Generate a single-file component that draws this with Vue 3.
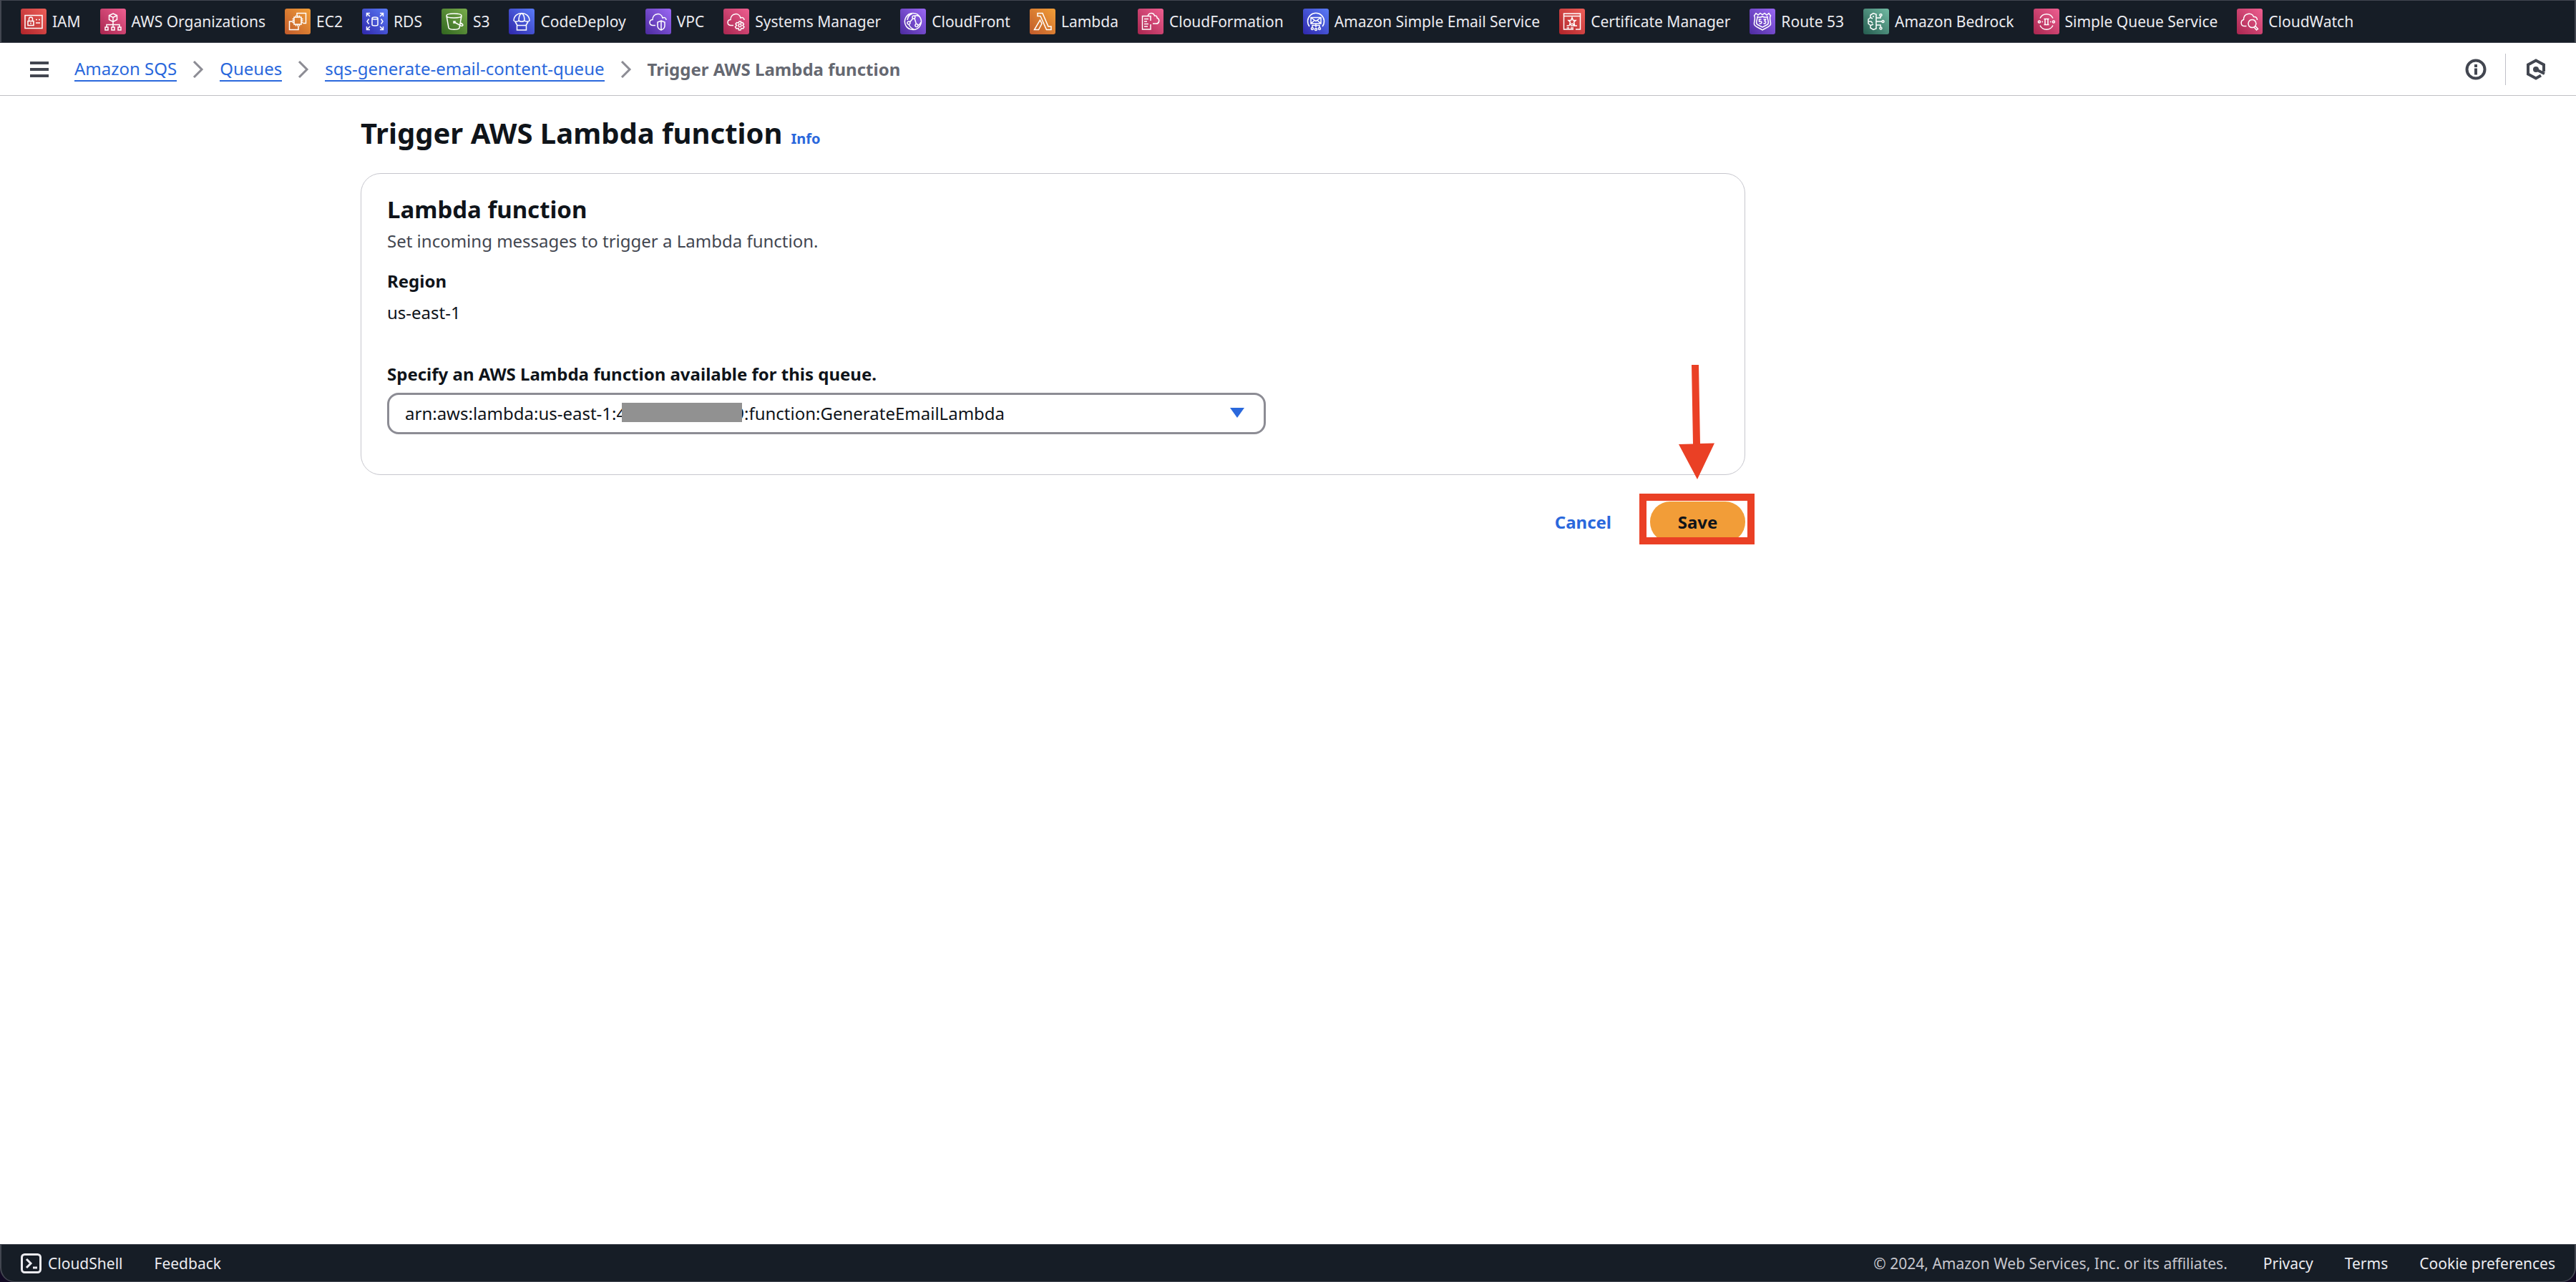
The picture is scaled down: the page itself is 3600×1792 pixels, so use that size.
<script setup>
import { ref } from 'vue'

const services = [
  {
    name: 'IAM', tone: 'red',
    d: 'M6 9.500H30V27.500H6Z M10 17.500H18V23.500H10Z M11.500 17.500V14.500A2.500 2.500 0 0 1 16.500 14.500V17.500 M14 19.500V21.500 M21 15.500H23 M25 15.500H27 M21 20H27'
  },
  {
    name: 'AWS Organizations', tone: 'pink',
    d: 'M18 7L23.500 9.500V15.500L18 18.500L12.500 15.500V9.500Z M12.500 9.500L18 12.500L23.500 9.500 M18 12.500V26 M9 26V22.500H27V26 M7 26H11V30H7Z M16 26H20V30H16Z M25 26H29V30H25Z'
  },
  {
    name: 'EC2', tone: 'orange',
    d: 'M13 12H23V22H13Z M15.500 9.500V12 M18 9.500V12 M20.500 9.500V12 M15.500 22V24.500 M18 22V24.500 M20.500 22V24.500 M10.500 14.500H13 M10.500 17H13 M10.500 19.500H13 M23 14.500H25.500 M23 17H25.500 M23 19.500H25.500 M17 10V6.500H29.500V20.500H25.500 M11 18H6.500V29.500H19V24.500'
  },
  {
    name: 'RDS', tone: 'blue',
    d: 'M14 13.500C14 11.500 22 11.500 22 13.500V22.500C22 24.500 14 24.500 14 22.500Z M14 13.500C14 15.500 22 15.500 22 13.500 M6.500 11V6.500H11 M6.500 6.500L11 11 M25 6.500H29.500V11 M29.500 6.500L25 11 M6.500 25V29.500H11 M6.500 29.500L11 25 M25 29.500H29.500V25 M29.500 29.500L25 25 M9.500 14.500L7 18L9.500 21.500 M26.500 14.500L29 18L26.500 21.500'
  },
  {
    name: 'S3', tone: 'green',
    d: 'M7 10C7 6 28 6 28 10C28 14 7 14 7 10L10 27C11 30 24 30 25 27L28 10 M18 19L27 24C31 25 31 22 26.500 20 M17 18H19V20H17Z'
  },
  {
    name: 'CodeDeploy', tone: 'blue',
    d: 'M7 17C7 3 29 3 29 17Q25.500 19.500 22 17Q18 19.500 14 17Q10.500 19.500 7 17 M14 17C14 12 15 8 18 6.500C21 8 22 12 22 17 M9 18.500L12 23.500 M27 18.500L24 23.500 M11.500 23.500H24.500V30H11.500Z'
  },
  {
    name: 'VPC', tone: 'purple',
    d: 'M14 23.500H10C4.500 23 5 15.500 10 15.500C10 6 22 5 24 13C27 11.500 29 13.500 29 16 M22 17L27 19V24C27 27 25 29 22 30C19 29 17 27 17 24V19Z M22 17V30'
  },
  {
    name: 'Systems Manager', tone: 'pink',
    d: 'M14 23.500H10C4.500 23 5 15.500 10 15.500C10 6 22 5 24 13C27 11.500 29 13.500 29 16 M22 18H24.500V20L27 19.500L28.500 22L27 23.500L29 25.500L27.500 28L25 27.500L24 30H21.500L21 27.500L18 28L16.500 25.500L18.500 23.500L17 21.500L18.500 19.500L21 20Z M23 21.500A2 2 0 1 1 22.900 21.500'
  },
  {
    name: 'CloudFront', tone: 'purple',
    d: 'M18 6.500A11.500 11.500 0 1 1 17.900 6.500 M19 10A2 2 0 1 1 18.900 10 M12 18A2 2 0 1 1 11.900 18 M23 21.500A2 2 0 1 1 22.900 21.500 M18 13.500L13.500 19 M20 13.500L22.500 21.500 M17 7Q11 9 10 16 M12 22Q14 27 19 29 M20.500 10Q26 9 27.500 12 M25 24Q28 22 29 19'
  },
  {
    name: 'Lambda', tone: 'orange',
    d: 'M11 6.500H18L26 25H30V29.500H23.500L15 10.500H11Z M14.500 16L17 21L12.500 29.500H6.500Z'
  },
  {
    name: 'CloudFormation', tone: 'pink',
    d: 'M18 17V10.500H6.500V29H18V22 M9 14.500H15 M9 18H13 M9 21.500H15 M9 25H14 M14 11C15 5.500 22 5 23.500 10C26 9.500 27 11 27 13C31.500 15 30 21 26 21H21'
  },
  {
    name: 'Amazon Simple Email Service', tone: 'blue',
    d: 'M9 25A11.500 11.500 0 1 1 27 25 M11 12.500H25V21H11Z M11 12.500L18 17.500L25 12.500 M11 21L16 16.500 M25 21L20 16.500 M18 21V26 M13 26V23.500H23V26 M13 26.500A1.500 1.500 0 1 1 12.900 26.500 M18 27.500A1.500 1.500 0 1 1 17.900 27.500 M23 26.500A1.500 1.500 0 1 1 22.900 26.500'
  },
  {
    name: 'Certificate Manager', tone: 'red',
    d: 'M23 29H29.500V7H6.500V29H20 M6.500 10.500H29.500 M18 12.500L19.500 16.500H23L20.500 19L21.500 23L18 21L14.500 23L15.500 19L13 16.500H16.500Z M10.500 24H14 M16 24H25 M10.500 27H14 M16 27H20'
  },
  {
    name: 'Route 53', tone: 'purple',
    d: 'M9 6.500L12 9L15 6.500L18 8.500L21 6.500L24 9L27 6.500L29.500 10C27 13 30 18 29.500 22C28 26 22 27 18 30C14 27 8 26 6.500 22C6 18 9 13 6.500 10Z M11 11.500Q14.500 13 18 11Q21.500 13 25 11.500C25 16 28 19 25.500 22Q22 24 18 26Q14 24 10.500 22C8 19 11 16 11 11.500Z M16.500 15H13.500V18Q17 17 17 19.500Q16.500 21.500 13.500 21 M19.500 15H22.500L21 17.500Q23.500 18 22.500 20Q21.500 21.500 19.500 20.500'
  },
  {
    name: 'Amazon Bedrock', tone: 'teal',
    d: 'M18 8V28L14 29.500L10 27V23.500L7 21V15L10 12.500V9L14 6.500Z M10 12.500L13 14 M7 18H11L13 20.500 M10 23.500L14 22 M14 10V12 M18 13H24V11 M18 18H26 M18 23H24V25.500 M24.500 7.500A1.500 1.500 0 1 1 24.400 7.500 M27.500 16.500A1.500 1.500 0 1 1 27.400 16.500 M24.500 26A1.500 1.500 0 1 1 24.400 26'
  },
  {
    name: 'Simple Queue Service', tone: 'pink',
    d: 'M9 13.500A10 10 0 0 1 27 13.500 M9 23.500A10 10 0 0 0 27 23.500 M14.500 14.500H21.500 M14.500 22.500H21.500 M16 14.500V22.500 M20 14.500V22.500 M8 17A1.500 1.500 0 1 1 7.900 17 M28 17A1.500 1.500 0 1 1 27.900 17 M11.500 18.500H13 M23 18.500H24.500'
  },
  {
    name: 'CloudWatch', tone: 'pink',
    d: 'M13.500 24.500H10C5 24 5 16.500 9.500 15.500C9.500 6 21 5 23.500 11.500C27 11 28.500 13 28.500 16 M21.500 15.500A5.500 5.500 0 1 1 21.400 15.500 M24 26L27.500 30L29.500 28.500L26 24.500'
  }
]

const arn = 'arn:aws:lambda:us-east-1:4000000000009:function:GenerateEmailLambda'
const selected = ref(arn)
</script>

<template>
  <div class="page">
    <nav class="services" aria-label="Favorite services">
      <a v-for="s in services" :key="s.name" href="#" class="service">
        <svg class="tile" :class="s.tone" viewBox="0 0 36 36" aria-hidden="true"><path :d="s.d" /></svg>
        <span>{{ s.name }}</span>
      </a>
    </nav>

    <header class="crumb-bar">
      <button class="icon-button" aria-label="Open navigation">
        <svg width="26" height="22" viewBox="0 0 26 22"><path d="M0 2H26M0 11H26M0 20H26" stroke="#424650" stroke-width="4" /></svg>
      </button>
      <ol class="crumbs">
        <li v-for="c in ['Amazon SQS', 'Queues', 'sqs-generate-email-content-queue']" :key="c">
          <a href="#">{{ c }}</a>
          <svg width="16" height="24" viewBox="0 0 16 24" aria-hidden="true"><path d="M2 1L13 12L2 23" fill="none" stroke="#8c8c94" stroke-width="3" /></svg>
        </li>
        <li aria-current="page">Trigger AWS Lambda function</li>
      </ol>
      <button class="icon-button" aria-label="Info panel">
        <svg width="30" height="30" viewBox="0 0 30 30"><circle cx="15" cy="15" r="12.500" fill="none" stroke="#424650" stroke-width="4" /><path d="M13 8H17V12H13ZM13 13.500H17V22.500H13Z" fill="#424650" /></svg>
      </button>
      <span class="divider"></span>
      <button class="icon-button" aria-label="Tools">
        <svg width="28" height="30" viewBox="0 0 28 30"><path d="M25 18V8.500L14 2.500L3 8.500V21.500L14 27.500L21 23.500M14 15L26 21" fill="none" stroke="#424650" stroke-width="4" /><circle cx="14" cy="15" r="4" fill="#424650" /></svg>
      </button>
    </header>

    <main class="content">
      <div class="title-row">
        <h1>Trigger AWS Lambda function</h1>
        <a href="#" class="info">Info</a>
      </div>

      <section class="card">
        <h2>Lambda function</h2>
        <p class="description">Set incoming messages to trigger a Lambda function.</p>
        <dl class="region">
          <dt>Region</dt>
          <dd>us-east-1</dd>
        </dl>
        <label for="fn">Specify an AWS Lambda function available for this queue.</label>
        <div class="select-wrap">
          <select id="fn" v-model="selected">
            <option :value="arn">{{ arn }}</option>
          </select>
          <span class="mask"></span>
          <svg class="caret" width="20" height="14" viewBox="0 0 20 14" aria-hidden="true"><path d="M0 0H20L10 14Z" fill="#2a68dc" /></svg>
        </div>
      </section>

      <div class="actions">
        <button class="cancel">Cancel</button>
        <div class="save-wrap">
          <button class="save">Save</button>
          <span class="highlight"></span>
          <svg class="arrow" width="50" height="160" viewBox="0 0 50 160" aria-hidden="true"><path d="M18 0H28L30 110L50 109.500L26 160L0 111L20 110.500Z" fill="#ea4025" /></svg>
        </div>
      </div>
    </main>

    <footer class="footer-backdrop">
      <div class="footer">
        <button class="shell">
          <svg width="29" height="28" viewBox="0 0 29 28" aria-hidden="true"><rect x="1.500" y="1.500" width="26" height="25" rx="4" fill="none" stroke="#ebebf0" stroke-width="3" /><path d="M8 8L14 14L8 20M17 20H23" fill="none" stroke="#ebebf0" stroke-width="3" /></svg>
          CloudShell
        </button>
        <a href="#">Feedback</a>
        <span class="copyright">© 2024, Amazon Web Services, Inc. or its affiliates.</span>
        <a href="#">Privacy</a>
        <a href="#">Terms</a>
        <a href="#">Cookie preferences</a>
      </div>
    </footer>
  </div>
</template>

<style>
body {
  margin: 0;
  background: #fff;
}
</style>

<style scoped>
.page {
  display: flex;
  flex-direction: column;
  min-height: 100vh;
  font-family: "Noto Sans", "Open Sans", sans-serif;
  font-size: 24px;
  line-height: 40px;
  color: #0f141a;
}
* {
  box-sizing: border-box;
}
a {
  color: #2a68dc;
  text-decoration: none;
}
button {
  padding: 0;
  border: 0;
  background: none;
  font: inherit;
  color: inherit;
}
svg {
  display: block;
  flex: none;
}
.services {
  display: flex;
  align-items: center;
  gap: 27px;
  height: 60px;
  padding: 0 27px;
  border: 1px solid #424650;
  border-width: 1px 2px;
  background: #161d26;
  font-size: 21px;
  overflow: hidden;
}
.service {
  display: flex;
  align-items: center;
  gap: 8px;
  color: #ebebf0;
  white-space: nowrap;
}
.tile {
  width: 36px;
  height: 36px;
  border-radius: 3px;
  fill: none;
  stroke: #fff;
  stroke-width: 1.500;
}
.red { background: linear-gradient(45deg, #b0242a, #ee5f59); }
.pink { background: linear-gradient(45deg, #a8264f, #ef5f91); }
.orange { background: linear-gradient(45deg, #c05a2b, #f29f38); }
.blue { background: linear-gradient(45deg, #2f27ab, #5a7cf8); }
.green { background: linear-gradient(45deg, #31661f, #79ac4c); }
.purple { background: linear-gradient(45deg, #4b2a9e, #9b68f5); }
.teal { background: linear-gradient(45deg, #245b4e, #72bba4); }
.crumb-bar {
  display: flex;
  align-items: center;
  height: 74px;
  padding: 0 42px;
  border-bottom: 1px solid #c0c0c4;
}
.crumbs {
  display: flex;
  flex: 1;
  margin: 0 0 0 36px;
  padding: 0;
  list-style: none;
  line-height: 32px;
}
.crumbs li {
  display: flex;
  align-items: center;
  color: #656871;
}
.crumbs li[aria-current] {
  font-weight: 700;
}
.crumbs a {
  border-bottom: 2px solid #2a68dc;
}
.crumbs svg {
  margin: 0 22px;
}
.divider {
  width: 1px;
  height: 44px;
  margin: 0 28px 0 26px;
  background: #c0c0c8;
}
.content {
  flex: 1;
  width: 53.75%;
  margin-left: 14%;
}
.title-row {
  display: flex;
  align-items: baseline;
  gap: 12px;
  padding: 24px 0 28px;
}
h1 {
  margin: 0;
  font-size: 40px;
  line-height: 56px;
}
.info {
  font-size: 20px;
  font-weight: 700;
}
.card {
  padding: 26px 36px 56px;
  border: 1px solid #c6c6cd;
  border-radius: 28px;
}
h2 {
  margin: 0;
  font-size: 33px;
  line-height: 48px;
}
.description {
  margin: 0;
  color: #424650;
}
.region {
  margin: 16px 0 46px;
}
dt {
  font-weight: 700;
}
dd {
  margin: 4px 0 0;
}
label {
  display: block;
  font-weight: 700;
}
.select-wrap {
  position: relative;
  width: 66%;
  margin-top: 6px;
}
select {
  display: block;
  width: 100%;
  height: 58px;
  padding: 0 60px 0 22px;
  border: 3px solid #8c8c94;
  border-radius: 16px;
  appearance: none;
  background: #fff;
  font: inherit;
  color: inherit;
}
.mask {
  position: absolute;
  left: 328px;
  top: 14px;
  width: 168px;
  height: 27px;
  background: #919191;
}
.caret {
  position: absolute;
  right: 30px;
  top: 21px;
}
.actions {
  display: flex;
  justify-content: flex-end;
  align-items: center;
  gap: 54px;
  padding-top: 37px;
  font-weight: 700;
}
.cancel {
  color: #2a68dc;
}
.save-wrap {
  position: relative;
}
.save {
  display: block;
  width: 133px;
  height: 57px;
  border-radius: 28px;
  background: #f29d38;
}
.highlight {
  position: absolute;
  left: -15px;
  top: -11px;
  width: 161px;
  height: 71px;
  border: 10px solid #ea4025;
}
.arrow {
  position: absolute;
  left: 40px;
  top: -191px;
}
.footer-backdrop {
  background: #120a24;
}
.footer {
  display: flex;
  align-items: center;
  height: 53px;
  padding: 0 27px;
  border: 1px solid #424650;
  border-width: 1px 2px;
  border-radius: 0 0 20px 20px;
  background: #161d26;
  font-size: 21px;
  gap: 44px;
}
.footer a,
.shell {
  color: #ebebf0;
}
.shell {
  display: flex;
  align-items: center;
  gap: 9px;
}
.copyright {
  margin: 0 6px 0 auto;
  color: #c6c6cd;
}
</style>
